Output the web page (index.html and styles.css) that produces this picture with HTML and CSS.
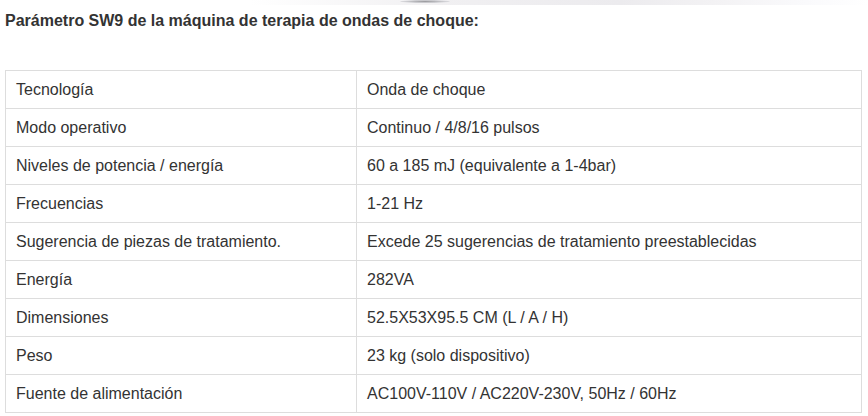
FILE: index.html
```html
<!DOCTYPE html>
<html lang="es">
<head>
<meta charset="utf-8">
<title>Parámetro SW9</title>
<link rel="stylesheet" href="styles.css">
</head>
<body>
<div class="photo-edge"><div class="photo-shadow"></div></div>
<h3 class="title">Parámetro SW9 de la máquina de terapia de ondas de choque:</h3>
<table class="spec">
<tbody>
<tr><td>Tecnología</td><td>Onda de choque</td></tr>
<tr><td>Modo operativo</td><td>Continuo / 4/8/16 pulsos</td></tr>
<tr><td>Niveles de potencia / energía</td><td>60 a 185 mJ (equivalente a 1-4bar)</td></tr>
<tr><td>Frecuencias</td><td>1-21 Hz</td></tr>
<tr><td>Sugerencia de piezas de tratamiento.</td><td>Excede 25 sugerencias de tratamiento preestablecidas</td></tr>
<tr><td>Energía</td><td>282VA</td></tr>
<tr><td>Dimensiones</td><td>52.5X53X95.5 CM (L / A / H)</td></tr>
<tr><td>Peso</td><td>23 kg (solo dispositivo)</td></tr>
<tr><td>Fuente de alimentación</td><td>AC100V-110V / AC220V-230V, 50Hz / 60Hz</td></tr>
</tbody>
</table>
</body>
</html>
```
FILE: styles.css
```css
html, body {
  margin: 0;
  padding: 0;
  background: #fff;
}
body {
  font-family: "Liberation Sans", Arial, sans-serif;
  color: #333;
}
.photo-edge {
  position: relative;
  height: 5px;
  margin-left: 250px;
  background: linear-gradient(to right, #fff 0%, #f1f0f2 30%, #ecebee 60%, #f3f2f4 75%, #fafafc 90%, #fff 100%);
}
.photo-shadow {
  position: absolute;
  left: 150px;
  top: 0;
  width: 50px;
  height: 3px;
  border-radius: 50%;
  background: radial-gradient(ellipse at center, #9c9ca0 0%, #d4d4d8 60%, rgba(255,255,255,0) 100%);
}
.title {
  margin: 5px 0 0 5px;
  font-size: 16px;
  font-weight: bold;
  line-height: 22px;
  color: #333;
}
.spec {
  margin: 38px 0 0 5px;
  width: 857px;
  border-collapse: collapse;
  font-size: 16px;
}
.spec td {
  border: 1px solid #ddd;
  height: 37px;
  padding: 0 10px;
  line-height: 20px;
  vertical-align: middle;
}
.spec td:first-child {
  width: 330px;
}
```
